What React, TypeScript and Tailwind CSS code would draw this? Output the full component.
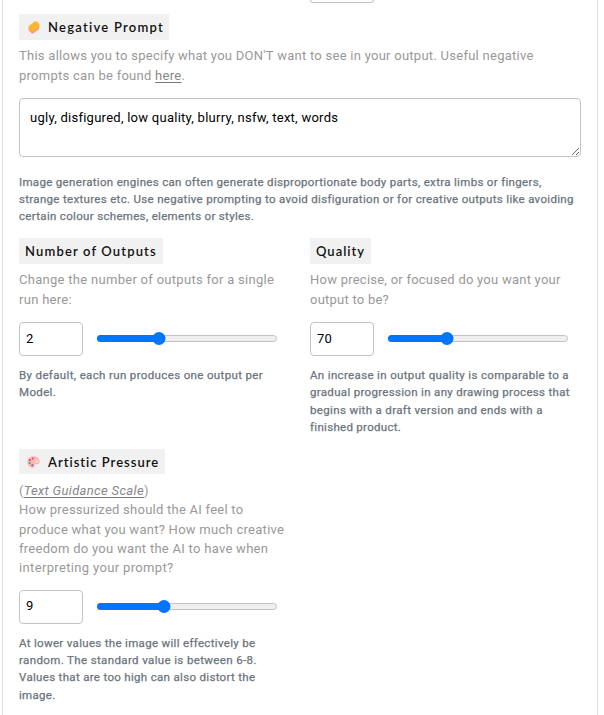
import type { ReactNode } from "react";

const bodyFont = "font-['Roboto','Liberation_Sans',sans-serif]";

function Heading({ icon, children, className }: { icon?: ReactNode; children: ReactNode; className: string }) {
  return (
    <h2 className={`flex items-center whitespace-nowrap bg-[#f1f1f1] pl-1.5 font-['Lato','Liberation_Sans',sans-serif] text-[13px] font-semibold text-[#111] ${className}`}>
      {icon}
      <span className="pt-0.5">{children}</span>
    </h2>
  );
}

function Line({ children, className = "" }: { children: ReactNode; className?: string }) {
  return <span className={`block whitespace-nowrap ${className}`}>{children}</span>;
}

function Note({ children, className }: { children: ReactNode; className: string }) {
  return (
    <p className={`text-[11.5px] text-[#6c757d] [-webkit-text-stroke:0.25px_#6c757d] ${className}`}>
      {children}
    </p>
  );
}

function Control({ value, position }: { value: number; position: number }) {
  return (
    <div className="flex h-[34px] items-center">
      <input
        type="text"
        defaultValue={value}
        className="h-[34px] w-16 rounded-[4px] border border-[#c4c4c4] bg-white pb-0.5 pl-1.5 text-[13px] tracking-[0.2px] text-black"
      />
      <div className="relative mb-px ml-3.5 h-[7px] w-[180px] rounded-full border border-[#c2c2c2] bg-[#efefef]">
        <div className="absolute -left-px -top-px h-[7px] rounded-l-full bg-[#0075ff]" style={{ width: position }} />
        <div className="absolute -top-1 size-[13px] -translate-x-1/2 rounded-full bg-[#0075ff]" style={{ left: position - 1 }} />
      </div>
    </div>
  );
}

function SpongeIcon() {
  return (
    <svg className="ml-[3px] mr-2 h-[13px] w-[12px]" viewBox="0 0 12 13">
      <path d="M.5 6.5 5.5 3 11.5 4.2 11 8 5.2 12.6 3.8 12.4.8 9.4z" fill="#ff8f86" />
      <path d="M.5 7.9 1 4.8 2.2 4 6.4.4 9.2.6 11.5 3.4 11.2 5.6 9 7.8 5.8 10.8 3.6 10.6z" fill="#fcb733" />
      <path d="m3.2 5.4.8-.5M6.4 3l1 .4M5.4 6l.8.2M2.8 7.8l.6.3M8.2 5.2l.6-.5M5 8.7l.7-.2" stroke="#e69a20" strokeWidth=".8" />
    </svg>
  );
}

function PaletteIcon() {
  return (
    <svg className="ml-0.5 mr-2 h-3 w-[13px]" viewBox="0 0 13 12">
      <path d="M6.3.3C2.8.3.4 2.7.4 6c0 3.2 2.3 5.7 5.3 5.7 2.2 0 2-1.8 2-2.5 0-.9.8-1.1 1.9-1 2 .2 3-.5 3-2.4C12.6 2.5 9.9.3 6.3.3z" fill="#ffb5aa" />
      <ellipse cx="9.8" cy="5.7" rx="1.5" ry="1.2" fill="#f8e3df" />
      <circle cx="5.8" cy="2.4" r="1" fill="#8b55e8" />
      <circle cx="2.9" cy="4" r="1" fill="#f0287c" />
      <circle cx="2.6" cy="7.1" r="1" fill="#13b98a" />
      <circle cx="5.3" cy="9.3" r="1" fill="#3f62ec" />
    </svg>
  );
}

export default function App() {
  return (
    <main className={`h-[715px] w-[604px] overflow-hidden bg-white pl-0.5 ${bodyFont}`}>
      <div className="h-[715px] w-[596px] border-x border-[#dddde5] px-4">
        <div className="ml-[291px] h-[3px] w-16 rounded-b-[4px] border border-t-0 border-[#c4c4c4]" />
        <section className="mt-[11px]">
          <Heading className="h-[26px] w-[150px] tracking-[1.25px]" icon={<SpongeIcon />}>Negative Prompt</Heading>
          <p className="mt-1.5 text-[13px] leading-5 text-[#999]">
            <Line className="tracking-[0.265px]">This allows you to specify what you DON'T want to see in your output. Useful negative</Line>
            <Line className="tracking-[0.27px]">prompts can be found <a className="text-[#888] underline decoration-[#777] decoration-1 underline-offset-2">here</a>.</Line>
          </p>
          <textarea
            defaultValue="ugly, disfigured, low quality, blurry, nsfw, text, words"
            className="mt-3 block h-[59px] w-[562px] resize rounded-[4px] border border-[#c4c4c4] px-2.5 py-[9px] text-[13px] leading-5 tracking-[0.26px] text-black"
          />
          <Note className="mt-[17px] leading-[17px]">
            <Line className="tracking-[0.325px]">Image generation engines can often generate disproportionate body parts, extra limbs or fingers,</Line>
            <Line className="tracking-[0.32px]">strange textures etc. Use negative prompting to avoid disfiguration or for creative outputs like avoiding</Line>
            <Line className="tracking-[0.32px]">certain colour schemes, elements or styles.</Line>
          </Note>
        </section>

        <div className="mt-[13px] flex">
          <section className="w-[291px]">
            <Heading className="h-[26px] w-36 tracking-[1.15px]">Number of Outputs</Heading>
            <p className="mb-3 mt-1.5 text-[13px] leading-5 text-[#999]">
              <Line className="tracking-[0.29px]">Change the number of outputs for a single</Line>
              <Line className="tracking-[0.29px]">run here:</Line>
            </p>
            <Control value={2} position={61.5} />
            <Note className="mt-[11px] leading-[17.3px]">
              <Line className="tracking-[0.36px]">By default, each run produces one output per</Line>
              <Line className="tracking-[0.36px]">Model.</Line>
            </Note>
          </section>
          <section>
            <Heading className="h-[26px] w-[61px] tracking-[1px]">Quality</Heading>
            <p className="mb-3 mt-1.5 text-[13px] leading-5 text-[#999]">
              <Line className="tracking-[0.24px]">How precise, or focused do you want your</Line>
              <Line className="tracking-[0.24px]">output to be?</Line>
            </p>
            <Control value={70} position={58.5} />
            <Note className="mt-[11px] leading-[17.3px]">
              <Line className="tracking-[0.35px]">An increase in output quality is comparable to a</Line>
              <Line className="tracking-[0.32px]">gradual progression in any drawing process that</Line>
              <Line className="tracking-[0.35px]">begins with a draft version and ends with a</Line>
              <Line className="tracking-[0.3px]">finished product.</Line>
            </Note>
          </section>
        </div>

        <section className="mt-[13px]">
          <Heading className="h-[25px] w-[146px] tracking-[1px]" icon={<PaletteIcon />}>Artistic Pressure</Heading>
          <p className="mb-3 mt-[7px] text-[13px] leading-[19.3px] text-[#999]">
            <Line className="tracking-[0.33px]">(<a className="italic text-[#888] underline decoration-[#777] decoration-1 underline-offset-2">Text Guidance Scale</a>)</Line>
            <Line className="tracking-[0.25px]">How pressurized should the AI feel to</Line>
            <Line className="tracking-[0.27px]">produce what you want? How much creative</Line>
            <Line className="tracking-[0.28px]">freedom do you want the AI to have when</Line>
            <Line className="tracking-[0.35px]">interpreting your prompt?</Line>
          </p>
          <Control value={9} position={66.5} />
          <Note className="mt-[11px] leading-[17.3px]">
            <Line className="tracking-[0.32px]">At lower values the image will effectively be</Line>
            <Line className="tracking-[0.37px]">random. The standard value is between 6-8.</Line>
            <Line className="tracking-[0.32px]">Values that are too high can also distort the</Line>
            <Line className="tracking-[0.3px]">image.</Line>
          </Note>
        </section>
      </div>
    </main>
  );
}
